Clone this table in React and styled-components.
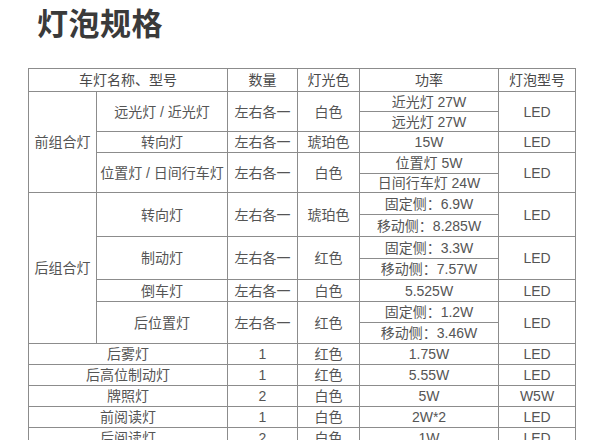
import React from "react";
import styled, { createGlobalStyle } from "styled-components";

const GlobalStyle = createGlobalStyle`
  html, body {
    margin: 0;
    padding: 0;
    background: #ffffff;
  }
  body {
    font-family: "Liberation Sans", "Noto Sans CJK SC", sans-serif;
    overflow: hidden;
  }
`;

const Page = styled.div`
  width: 601px;
  height: 440px;
  overflow: hidden;
  padding-left: 28px;
  box-sizing: border-box;
`;

const Title = styled.h1`
  margin: 0 0 0 9px;
  padding-top: 2px;
  height: 68px;
  font-family: "Noto Sans CJK SC", sans-serif;
  font-size: 31px;
  font-weight: 700;
  line-height: 40px;
  letter-spacing: 0.5px;
  color: #3a3a3a;
  box-sizing: border-box;
`;

const Table = styled.table`
  border-collapse: collapse;
  table-layout: fixed;
  width: 547px;
  color: #555;
  font-size: 14px;
`;

const Row = styled.tr`
  height: ${(p) => p.$h}px;
`;

const Cell = styled.td`
  border: 1px solid #8c8c8c;
  padding: 0;
  text-align: center;
  vertical-align: middle;
  line-height: 16px;
  white-space: nowrap;
  font-family: "Liberation Sans", "Noto Sans CJK SC", sans-serif;
  font-weight: 400;
`;

const Head = styled(Cell).attrs({ as: "th" })`
  font-weight: 400;
  color: #4a4a4a;
`;

// body rows: each sub-row of the power column is its own <tr>
const rows = [
  { h: 20, cells: [
    { t: "前组合灯", rs: 5 },
    { t: "远光灯 / 近光灯", rs: 2 },
    { t: "左右各一", rs: 2 },
    { t: "白色", rs: 2 },
    { t: "近光灯 27W" },
    { t: "LED", rs: 2 },
  ] },
  { h: 20, cells: [{ t: "远光灯 27W" }] },
  { h: 21, cells: [
    { t: "转向灯" }, { t: "左右各一" }, { t: "琥珀色" }, { t: "15W" }, { t: "LED" },
  ] },
  { h: 21, cells: [
    { t: "位置灯 / 日间行车灯", rs: 2 },
    { t: "左右各一", rs: 2 },
    { t: "白色", rs: 2 },
    { t: "位置灯 5W" },
    { t: "LED", rs: 2 },
  ] },
  { h: 19, cells: [{ t: "日间行车灯 24W" }] },
  { h: 22, cells: [
    { t: "后组合灯", rs: 7 },
    { t: "转向灯", rs: 2 },
    { t: "左右各一", rs: 2 },
    { t: "琥珀色", rs: 2 },
    { t: "固定侧：6.9W" },
    { t: "LED", rs: 2 },
  ] },
  { h: 22, cells: [{ t: "移动侧：8.285W" }] },
  { h: 22, cells: [
    { t: "制动灯", rs: 2 },
    { t: "左右各一", rs: 2 },
    { t: "红色", rs: 2 },
    { t: "固定侧：3.3W" },
    { t: "LED", rs: 2 },
  ] },
  { h: 21, cells: [{ t: "移动侧：7.57W" }] },
  { h: 22, cells: [
    { t: "倒车灯" }, { t: "左右各一" }, { t: "白色" }, { t: "5.525W" }, { t: "LED" },
  ] },
  { h: 21, cells: [
    { t: "后位置灯", rs: 2 },
    { t: "左右各一", rs: 2 },
    { t: "红色", rs: 2 },
    { t: "固定侧：1.2W" },
    { t: "LED", rs: 2 },
  ] },
  { h: 21, cells: [{ t: "移动侧：3.46W" }] },
  { h: 21, cells: [{ t: "后雾灯", cs: 2 }, { t: "1" }, { t: "红色" }, { t: "1.75W" }, { t: "LED" }] },
  { h: 21, cells: [{ t: "后高位制动灯", cs: 2 }, { t: "1" }, { t: "红色" }, { t: "5.55W" }, { t: "LED" }] },
  { h: 21, cells: [{ t: "牌照灯", cs: 2 }, { t: "2" }, { t: "白色" }, { t: "5W" }, { t: "W5W" }] },
  { h: 21, cells: [{ t: "前阅读灯", cs: 2 }, { t: "1" }, { t: "白色" }, { t: "2W*2" }, { t: "LED" }] },
  { h: 21, cells: [{ t: "后阅读灯", cs: 2 }, { t: "2" }, { t: "白色" }, { t: "1W" }, { t: "LED" }] },
];

const widths = [68, 131, 70, 62, 139, 77];

const App = () => {
  return (
    <Page>
      <GlobalStyle />
      <Title>灯泡规格</Title>
      <Table>
        <colgroup>
          {widths.map((w, i) => (
            <col key={i} style={{ width: w }} />
          ))}
        </colgroup>
        <thead>
          <Row $h={23}>
            <Head colSpan={2}>车灯名称、型号</Head>
            <Head>数量</Head>
            <Head>灯光色</Head>
            <Head>功率</Head>
            <Head>灯泡型号</Head>
          </Row>
        </thead>
        <tbody>
          {rows.map((r, i) => (
            <Row key={i} $h={r.h}>
              {r.cells.map((c, j) => (
                <Cell key={j} rowSpan={c.rs} colSpan={c.cs}>
                  {c.t}
                </Cell>
              ))}
            </Row>
          ))}
        </tbody>
      </Table>
    </Page>
  );
};

export default App;
